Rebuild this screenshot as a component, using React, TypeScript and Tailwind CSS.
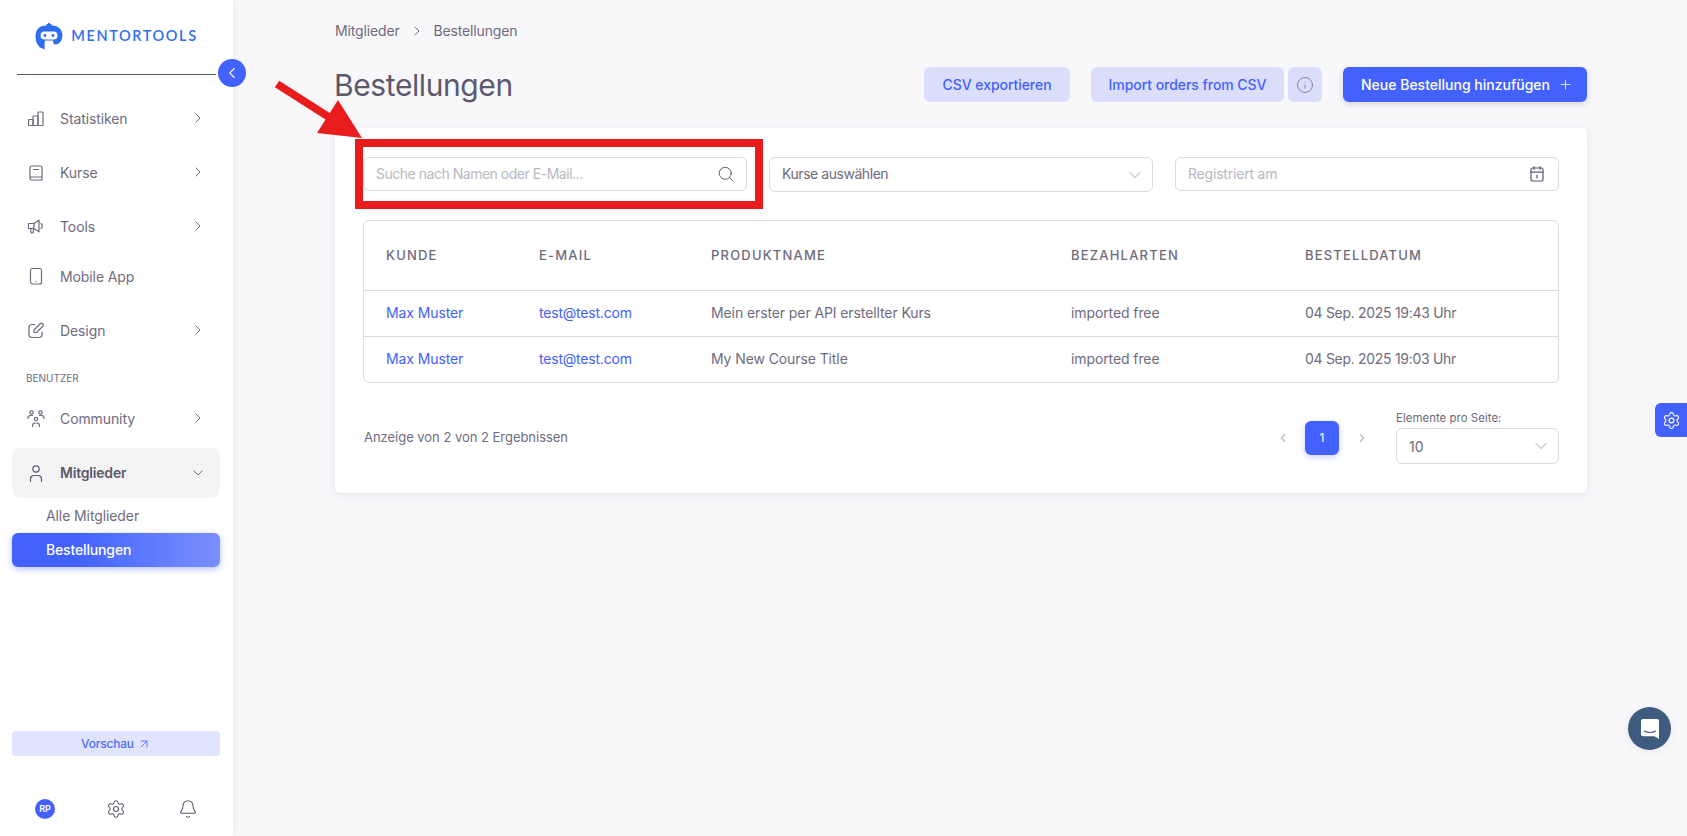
import React from "react";
import { ArrowUpRight, Bell, ChevronDown, ChevronLeft, ChevronRight, Info, Plus, Search, Settings } from "lucide-react";

const font = "font-['Inter','Liberation_Sans',sans-serif]";

const Icon = ({ children }: { children: React.ReactNode }) => (
  <svg width="18" height="18" viewBox="0 0 18 18" fill="none" stroke="currentColor" strokeWidth="1.2" strokeLinejoin="round" strokeLinecap="round">
    {children}
  </svg>
);

const StatsIcon = () => (
  <Icon>
    <rect x="1.5" y="10.5" width="4.5" height="6" rx="0.8" />
    <rect x="6" y="7" width="5" height="9.5" rx="0.8" />
    <rect x="11" y="3" width="5" height="13.5" rx="0.8" />
  </Icon>
);

const BookIcon = () => (
  <Icon>
    <path d="M3 14.5V4.5A1.5 1.5 0 0 1 4.5 3h9A1.5 1.5 0 0 1 15 4.5v9.5H4.5A1.5 1.5 0 0 0 3 15.5 1.5 1.5 0 0 0 4.5 17H15v-3" />
    <path d="M6.5 6.5h5" />
  </Icon>
);

const MegaphoneIcon = () => (
  <Icon>
    <path d="M1.5 6.5h5.5L12 3.2v11.6L7 11.5H1.5z" />
    <path d="M7 6.5v5M3.8 11.5v3.2a1.2 1.2 0 0 0 1.2 1.2h.2A1.2 1.2 0 0 0 6.4 14.7v-3.2" />
    <path d="M14 6.5a3 3 0 0 1 0 5" />
  </Icon>
);

const PhoneIcon = () => (
  <Icon>
    <rect x="3.5" y="1.5" width="11" height="15.5" rx="2" />
    <path d="M9 14.5h.01" />
  </Icon>
);

const PenIcon = () => (
  <Icon>
    <path d="M7.5 3.5H5A3 3 0 0 0 2 6.5v7A3 3 0 0 0 5 16.5h7a3 3 0 0 0 3-3V11" />
    <path d="M7 11.5V9l6.5-6.5a1.8 1.8 0 0 1 2.5 2.5L9.5 11.5z" />
  </Icon>
);

const CommunityIcon = () => (
  <Icon>
    <circle cx="4.5" cy="3.5" r="1.7" />
    <circle cx="13.5" cy="3.5" r="1.7" />
    <circle cx="9" cy="10" r="1.7" />
    <path d="M1 9.5V9a2.5 2.5 0 0 1 2.5-2.5h2M17 9.5V9a2.5 2.5 0 0 0-2.5-2.5h-2" />
    <path d="M5.5 17.5v-1a2.5 2.5 0 0 1 2.5-2.5h2a2.5 2.5 0 0 1 2.5 2.5v1" />
  </Icon>
);

const UserIcon = () => (
  <Icon>
    <circle cx="9" cy="5" r="3.2" />
    <path d="M3.5 17.5v-2.5A3.5 3.5 0 0 1 7 11.5h4a3.5 3.5 0 0 1 3.5 3.5v2.5" />
  </Icon>
);

const CalendarIcon = () => (
  <svg width="18" height="18" viewBox="0 0 18 18" fill="none" stroke="#5d596c" strokeWidth="1.2" strokeLinecap="round">
    <rect x="3" y="3" width="12" height="13" rx="1.6" />
    <path d="M3 7.2h12M6 1.5v3M12 1.5v3M9 10v3" />
  </svg>
);

const NavRow = ({
  icon,
  label,
  arrow = true,
  className = "",
}: {
  icon: React.ReactNode;
  label: string;
  arrow?: boolean;
  className?: string;
}) => (
  <div className={`flex h-[50px] items-center pl-[15px] pr-[14px] text-[14px] text-[#6f6b7d] ${className}`}>
    <span className="w-[33px]">{icon}</span>
    <span className="flex-1 tracking-[-0.1px]">{label}</span>
    {arrow && <ChevronRight size={16} strokeWidth={1.5} />}
  </div>
);

const Logo = () => (
  <div className="flex h-[74px] items-center justify-center pb-[2px]">
    <svg width="28" height="29" viewBox="0 0 28 28" className="mr-[8px]">
      <path d="M11.5 2.5h5M14 .5v4" stroke="#2f6df0" strokeWidth="2" />
      <path
        d="M10 3h8a9.5 9.5 0 0 1 9.5 9.5c0 5-3 9.5-7 9.5-1.5 0-2-.8-2.2-2.2l-.4-1.7h-7.8l-.5 1.7v7.3L5 25C2 22.5.5 18.5.5 14.5V12.5A9.5 9.5 0 0 1 10 3z"
        fill="#2f6df0"
      />
      <rect x="5.5" y="9" width="17" height="8" rx="4" fill="#fff" />
      <circle cx="10" cy="13" r="1.4" fill="#2f6df0" />
      <circle cx="18" cy="13" r="1.4" fill="#2f6df0" />
    </svg>
    <span className="font-['Lato',sans-serif] text-[14.5px] font-semibold tracking-[1.6px] text-[#2f6df0]">MENTORTOOLS</span>
  </div>
);

const Sidebar = () => (
  <aside className="relative flex h-[836px] w-[233px] shrink-0 flex-col bg-white shadow-[0_0_8px_rgba(75,70,92,0.08)]">
    <Logo />
    <div className="mx-[17px] h-px bg-[#5d596c]" />
    <button className="absolute left-[218px] top-[59px] flex h-[28px] w-[28px] items-center justify-center rounded-full bg-[#4361ff] text-white">
      <ChevronLeft size={18} strokeWidth={1.5} />
    </button>
    <nav className="mt-[18px] flex flex-col pl-[12px] pr-[13px]">
      <NavRow icon={<StatsIcon />} label="Statistiken" className="mb-[4px]" />
      <NavRow icon={<BookIcon />} label="Kurse" className="mb-[4px]" />
      <NavRow icon={<MegaphoneIcon />} label="Tools" />
      <NavRow icon={<PhoneIcon />} label="Mobile App" arrow={false} className="mb-[4px]" />
      <NavRow icon={<PenIcon />} label="Design" />
      <div className="mt-[16px] flex h-[14px] items-center pl-[14px] text-[10px] text-[#6f6b7d]">BENUTZER</div>
      <NavRow icon={<CommunityIcon />} label="Community" className="mt-[8px] mb-[5px]" />
      <div className="flex h-[50px] items-center rounded-lg bg-[#f4f4f5] pl-[15px] pr-[14px] text-[14px] font-semibold text-[#5d596c]">
        <span className="w-[33px]">
          <UserIcon />
        </span>
        <span className="flex-1 pb-px tracking-[-0.2px]">Mitglieder</span>
        <ChevronDown size={16} strokeWidth={1.3} />
      </div>
      <div className="flex h-[34px] items-center pl-[34px] text-[14px] tracking-[-0.1px] text-[#6f6b7d]">Alle Mitglieder</div>
      <div className="mt-px flex h-[34px] items-center rounded-md bg-gradient-to-r from-[#4361ff] from-30% to-[#7a8ffb] pb-px pl-[34px] text-[14px] font-medium tracking-[-0.15px] text-white shadow-[0_2px_6px_rgba(67,97,255,0.4)]">
        Bestellungen
      </div>
    </nav>
    <div className="ml-[12px] mr-[13px] mt-auto flex h-[25px] items-center justify-center gap-[3px] rounded bg-[#e0e4fc] text-[12px] font-medium tracking-[-0.2px] text-[#4f6bfb]">
      Vorschau <ArrowUpRight size={14} strokeWidth={1.5} />
    </div>
    <div className="mb-[17px] mt-[43px] flex items-center pl-[35px] text-[#5d596c]">
      <div className="flex h-[20px] w-[20px] items-center justify-center rounded-full bg-[#4361ff] text-[9px] font-semibold text-white">RP</div>
      <Settings size={20} strokeWidth={1.3} className="ml-[51px]" />
      <Bell size={20} strokeWidth={1.3} className="ml-[52px]" />
    </div>
  </aside>
);

const Field = ({
  label,
  right,
  className = "",
}: {
  label: string;
  right: React.ReactNode;
  className?: string;
}) => (
  <div className={`flex items-center justify-between rounded-md border border-[#dbdade] bg-white pl-[12px] text-[14px] ${className}`}>
    <span className="pb-[2px]">{label}</span>
    {right}
  </div>
);

const rows = [
  { product: "Mein erster per API erstellter Kurs", date: "04 Sep. 2025 19:43 Uhr" },
  { product: "My New Course Title", date: "04 Sep. 2025 19:03 Uhr" },
];

const gridCols = "grid grid-cols-[153px_172px_360px_234px_1fr] pl-[22px]";

const Table = () => (
  <div className="mt-[28px] overflow-hidden rounded-md border border-[#dbdade] text-[14px] tracking-[-0.1px] text-[#6f6b7d]">
    <div className={`${gridCols} h-[69px] items-center text-[13px] font-medium tracking-[1.2px]`}>
      <span>KUNDE</span>
      <span>E-MAIL</span>
      <span>PRODUKTNAME</span>
      <span>BEZAHLARTEN</span>
      <span>BESTELLDATUM</span>
    </div>
    {rows.map((r) => (
      <div key={r.date} className={`${gridCols} h-[46px] items-center border-t border-[#dbdade] pb-[3px]`}>
        <span className="text-[#4361ff]">Max Muster</span>
        <span className="tracking-[-0.2px] text-[#4361ff]">test@test.com</span>
        <span>{r.product}</span>
        <span>imported free</span>
        <span className="tracking-[-0.3px]">{r.date}</span>
      </div>
    ))}
  </div>
);

const Pagination = () => (
  <div className="mt-[28px] flex items-center justify-between pl-px">
    <span className="pt-px text-[13px] tracking-[-0.03px] text-[#6f6b7d]">Anzeige von 2 von 2 Ergebnissen</span>
    <div className="flex items-center">
      <ChevronLeft size={14} className="mr-[15px] text-[#b9b7c0]" />
      <span className="flex h-[34px] w-[34px] items-center justify-center rounded-md bg-[#4361ff] text-[12px] text-white shadow-[0_2px_6px_rgba(67,97,255,0.3)]">
        1
      </span>
      <ChevronRight size={14} className="ml-[16px] text-[#b9b7c0]" />
      <div className="ml-[27px] w-[163px]">
        <div className="text-[11.5px] leading-[14px] text-[#6f6b7d]">Elemente pro Seite:</div>
        <div className="mt-[3px] flex h-[36px] items-center justify-between rounded-md border border-[#dbdade] pl-[12px] pr-[7px] text-[14px] text-[#6f6b7d]">
          10
          <ChevronDown size={20} strokeWidth={1.2} className="text-[#a5a3ae]" />
        </div>
      </div>
    </div>
  </div>
);

export default function App() {
  return (
    <div className={`relative flex h-[836px] w-[1687px] overflow-hidden bg-[#f8f7fa] ${font}`}>
      <Sidebar />
      <main className="flex-1 pl-[102px] pr-[100px]">
        <div className="flex h-[62px] items-center gap-[9px] text-[14px] tracking-[-0.15px] text-[#6f6b7d]">
          <span className="pb-px">Mitglieder</span>
          <ChevronRight size={16} strokeWidth={1.5} />
          <span className="pb-px">Bestellungen</span>
        </div>
        <div className="flex h-[66px] items-start justify-between">
          <h1 className="ml-[-1px] mt-[3px] text-[30px] leading-[40px] tracking-[-0.4px] text-[#5d596c]">Bestellungen</h1>
          <div className="mt-[5px] flex text-[14px] font-medium tracking-[-0.05px]">
            <button className="h-[35px] w-[146px] rounded-md bg-[#dadefa] text-[#4361ff]">CSV exportieren</button>
            <button className="ml-[21px] h-[35px] w-[193px] rounded-md bg-[#dadefa] text-[#4361ff]">Import orders from CSV</button>
            <button className="ml-[4px] flex h-[35px] w-[34px] items-center justify-center rounded-md bg-[#dadefa] text-[#7d7f96]">
              <Info size={18} strokeWidth={1.2} />
            </button>
            <button className="ml-[21px] flex h-[35px] w-[244px] items-center justify-center gap-[8px] rounded-md bg-[#4361ff] pl-[4px] tracking-normal text-white shadow-[0_2px_6px_rgba(75,70,92,0.2)]">
              Neue Bestellung hinzufügen <Plus size={15} strokeWidth={1.3} />
            </button>
          </div>
        </div>
        <section className="h-[365px] rounded-md bg-white px-[28px] pt-[29px] shadow-[0_2px_8px_rgba(75,70,92,0.1)]">
          <div className="grid grid-cols-3 items-start gap-[22px]">
            <Field
              className="h-[34px] pr-[11px] tracking-[-0.48px] text-[#b9b7c0]"
              label="Suche nach Namen oder E-Mail..."
              right={<Search size={18} strokeWidth={1.3} className="text-[#5d596c]" />}
            />
            <Field
              className="h-[35px] pr-[7px] tracking-[-0.45px] text-[#6f6b7d]"
              label="Kurse auswählen"
              right={<ChevronDown size={20} strokeWidth={1.2} className="text-[#a5a3ae]" />}
            />
            <Field className="h-[34px] pr-[12px] tracking-[-0.2px] text-[#b9b7c0]" label="Registriert am" right={<CalendarIcon />} />
          </div>
          <Table />
          <Pagination />
        </section>
      </main>

      {/* screenshot annotation */}
      <div className="absolute left-[355px] top-[139px] h-[70px] w-[408px] border-[8px] border-[#e81c1c]" />
      <svg className="absolute left-[270px] top-[75px]" width="100" height="70" viewBox="0 0 100 70">
        <line x1="7" y1="9" x2="62" y2="44" stroke="#e81c1c" strokeWidth="8" />
        <polygon points="92,63 68,25 47,58" fill="#e81c1c" />
      </svg>

      <div className="absolute left-[1655px] top-[403px] flex h-[34px] w-[32px] items-center justify-center rounded-l-md bg-[#4361ff] text-white">
        <Settings size={19} strokeWidth={1.4} />
      </div>
      <div className="absolute left-[1628px] top-[707px] flex h-[43px] w-[43px] items-center justify-center rounded-full bg-[#3f5b7f] shadow-[0_1px_8px_rgba(0,0,0,0.08)]">
        <svg width="20" height="22" viewBox="0 0 20 22">
          <path d="M3 1h14a2 2 0 0 1 2 2v18l-4.5-2.8H3a2 2 0 0 1-2-2V3a2 2 0 0 1 2-2z" fill="#fff" />
          <path d="M4.5 13c3 2 8 2 11 0" fill="none" stroke="#3f5b7f" strokeWidth="1.2" strokeLinecap="round" />
        </svg>
      </div>
    </div>
  );
}
